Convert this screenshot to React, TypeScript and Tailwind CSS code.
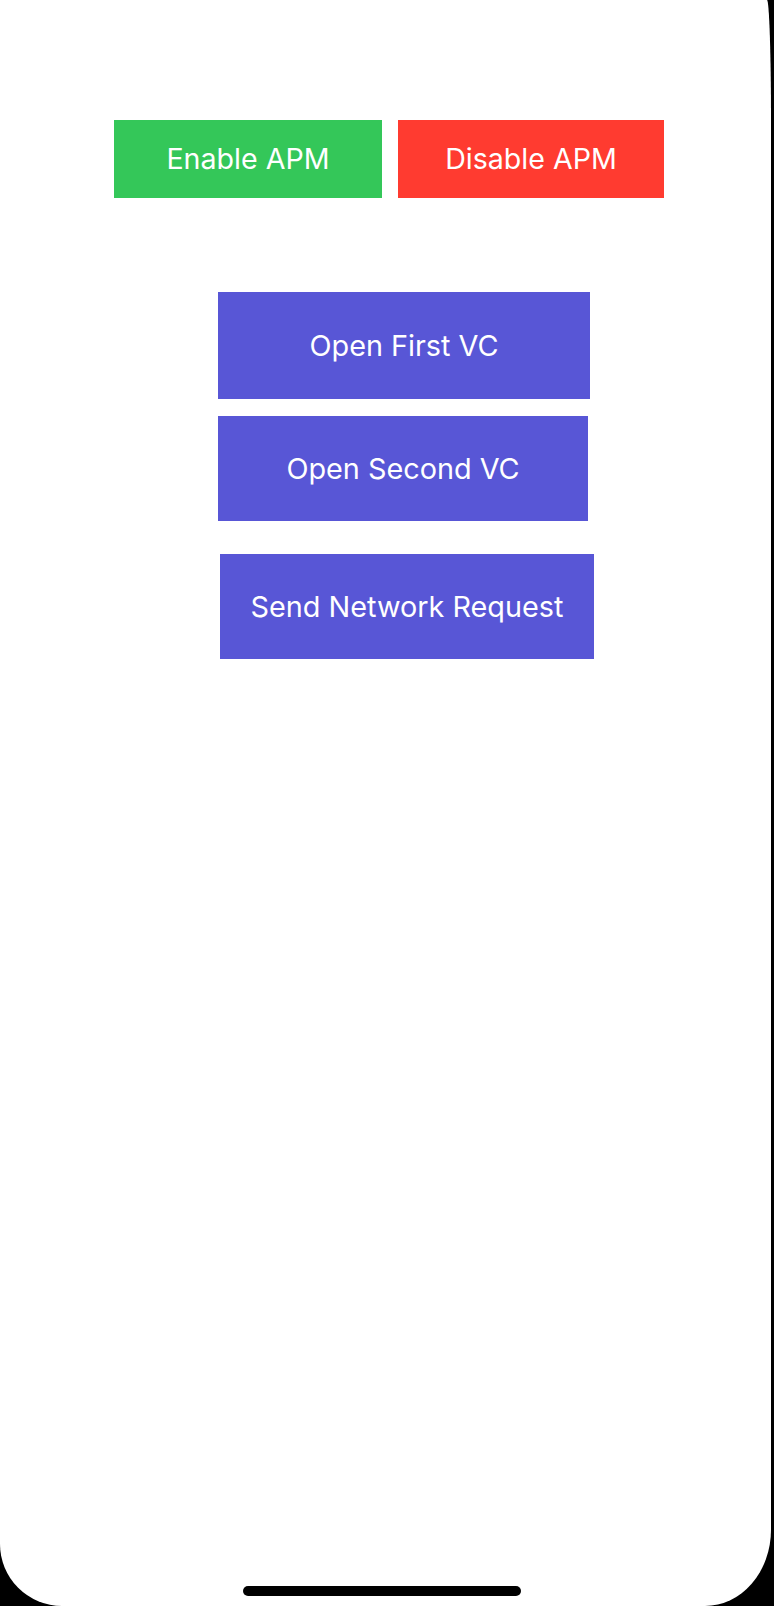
export default function App() {
  return (
    <div className="w-[774px] h-[1606px] bg-black overflow-hidden">
      <div className="w-[771px] h-[1606px] bg-white flex flex-col rounded-bl-[62px] rounded-br-[66px_76px] rounded-tr-[4px_120px] font-['Inter','Noto_Sans',sans-serif]">
        {/* APM toggles */}
        <div className="flex gap-[16px] pl-[114px] pt-[120px]">
          <button className="w-[268px] h-[78px] bg-[#34c759] text-white text-[28.6px] leading-none">
            Enable APM
          </button>
          <button className="w-[266px] h-[78px] bg-[#ff3b30] text-white text-[28.6px] leading-none">
            Disable APM
          </button>
        </div>

        <button className="ml-[218px] mt-[94px] w-[372px] h-[107px] bg-[#5856d6] text-white text-[28.8px] leading-none pt-[2px]">
          Open First VC
        </button>
        <button className="ml-[218px] mt-[17px] w-[370px] h-[105px] bg-[#5856d6] text-white text-[28.8px] leading-none pt-[2px]">
          Open Second VC
        </button>
        <button className="ml-[220px] mt-[33px] w-[374px] h-[105px] bg-[#5856d6] text-white text-[28.8px] leading-none pt-[2px]">
          Send Network Request
        </button>

        <div className="flex-1" />

        {/* home indicator */}
        <div className="ml-[243px] mb-[10px] w-[278px] h-[10px] rounded-full bg-black" />
      </div>
    </div>
  );
}
